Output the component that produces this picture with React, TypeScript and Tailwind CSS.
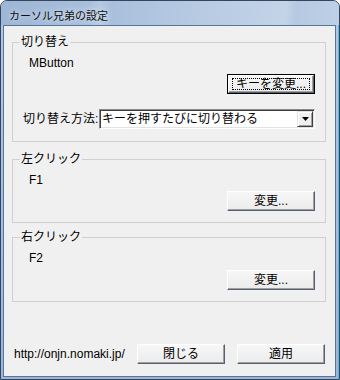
const font = "font-[family-name:'Liberation_Sans','Noto_Sans_CJK_JP',sans-serif]";

function Btn({ children, isDefault }: { children: React.ReactNode; isDefault?: boolean }) {
  if (isDefault) {
    return (
      <button className="h-[20px] w-[88px] border border-black bg-[#f0f0f0] p-0">
        <span className="flex h-full w-full items-center justify-center border border-t-white border-l-white border-b-[#556070] border-r-[#556070] bg-gradient-to-b from-[#f7f7f7] to-[#ebebeb] shadow-[inset_-1px_-1px_0_#a0a0a0]">
          <span className="flex h-[12px] w-[78px] items-center justify-center border border-dotted border-black leading-[12px]">
            {children}
          </span>
        </span>
      </button>
    );
  }
  return (
    <button className="flex h-[20px] w-[88px] items-center justify-center border border-t-white border-l-white border-b-[#556070] border-r-[#556070] bg-gradient-to-b from-[#f7f7f7] to-[#ebebeb] p-0 leading-[12px] shadow-[inset_-1px_-1px_0_#a0a0a0]">
      {children}
    </button>
  );
}

function Group({ title, className, children }: { title: string; className: string; children: React.ReactNode }) {
  return (
    <div className={`border border-[#d0d0d0] ${className}`}>
      <span className="-mt-[7px] ml-[7px] block w-fit bg-[#f0f0f0] px-[1px] leading-[12px]">{title}</span>
      {children}
    </div>
  );
}

export default function App() {
  return (
    <div
      className={`flex h-[380px] w-[340px] flex-col overflow-hidden rounded-t-[7px] border border-[#34465e] bg-gradient-to-b from-[#b4c9e3] to-[#9db6d6] text-[12px] text-black shadow-[inset_-1px_0_0_#43c0ee] ${font}`}
    >
      <div className="flex h-[24px] items-center bg-[linear-gradient(95deg,#9db6d5_0%,#a8bfdb_26%,#b4c9e2_29%,#a9c0dc_33%,#b8cbe3_60%,#c3d4e8_84%,#b5c9e2_87%,#bdd0e6_100%)] pt-[5px] pl-[8px]">
        <span className="text-[11px] leading-[12px] text-[#111] [text-shadow:0_0_6px_#ffffff]">カーソル兄弟の設定</span>
      </div>
      <div className="mr-[3px] mb-[2px] ml-[2px] flex flex-1 flex-col border border-[#56759d] bg-[#f0f0f0] pr-[9px] pl-[8px]">
        <Group title="切り替え" className="mt-[16px] pb-[12px]">
          <div className="mt-[9px] ml-[16px] leading-[12px]">MButton</div>
          <div className="mt-[5px] mr-[10px] flex justify-end">
            <Btn isDefault>キーを変更...</Btn>
          </div>
          <div className="mt-[15px] mr-[10px] ml-[10px] flex items-center">
            <span className="w-[76px] leading-[12px]">切り替え方法:</span>
            <div className="flex h-[20px] flex-1 items-center border border-t-[#8a8a8a] border-l-[#8a8a8a] border-b-white border-r-white bg-white shadow-[inset_1px_1px_0_#404040,inset_-1px_-1px_0_#e3e3e3]">
              <span className="flex-1 pl-[2px] leading-[12px]">キーを押すたびに切り替わる</span>
              <span className="mr-[1px] flex h-[16px] w-[16px] items-center justify-center border border-t-[#e3e3e3] border-l-[#e3e3e3] border-b-[#404040] border-r-[#404040] bg-[#f0f0f0] shadow-[inset_1px_1px_0_#ffffff,inset_-1px_-1px_0_#a0a0a0]">
                <svg width="7" height="4" viewBox="0 0 7 4">
                  <path d="M0 0h7L3.5 4z" fill="#000" />
                </svg>
              </span>
            </div>
          </div>
        </Group>

        <Group title="左クリック" className="mt-[17px] pb-[11px]">
          <div className="mt-[9px] ml-[16px] leading-[12px]">F1</div>
          <div className="mt-[5px] mr-[10px] flex justify-end">
            <Btn>変更...</Btn>
          </div>
        </Group>

        <Group title="右クリック" className="mt-[14px] pb-[11px]">
          <div className="mt-[9px] ml-[16px] leading-[12px]">F2</div>
          <div className="mt-[6px] mr-[10px] flex justify-end">
            <Btn>変更...</Btn>
          </div>
        </Group>

        <div className="mt-[42px] flex items-center">
          <span className="ml-[2px] leading-[12px]">http://onjn.nomaki.jp/</span>
          <div className="mr-[1px] ml-auto flex gap-[12px]">
            <Btn>閉じる</Btn>
            <Btn>適用</Btn>
          </div>
        </div>
      </div>
    </div>
  );
}
